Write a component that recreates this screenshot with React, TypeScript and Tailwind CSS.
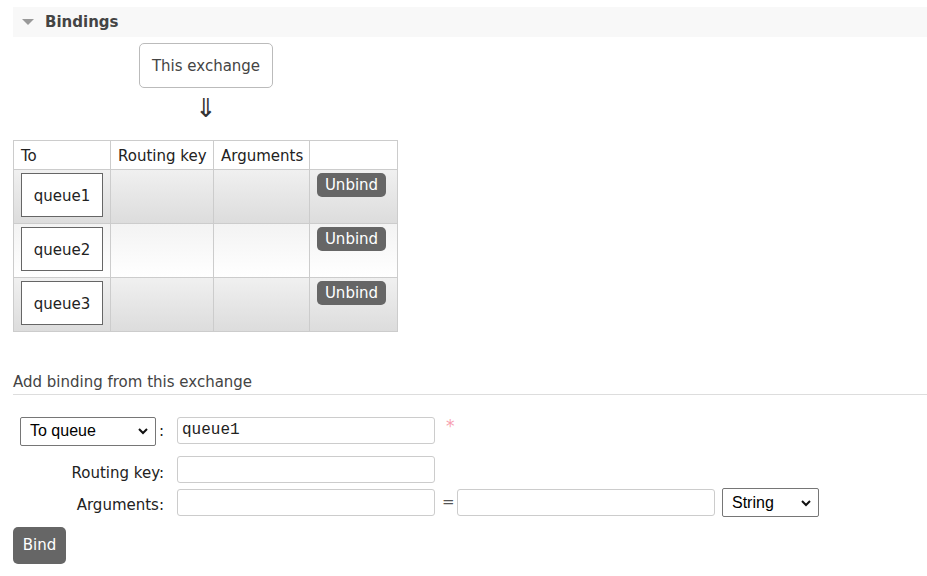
import React from "react";

const queues = ["queue1", "queue2", "queue3"];

function ChevronDown() {
  return (
    <svg width="12" height="12" viewBox="0 0 12 12" className="shrink-0">
      <path d="M2 4 L6 8 L10 4" fill="none" stroke="#111" strokeWidth="2" />
    </svg>
  );
}

function FakeSelect({ label, width }: { label: string; width: string }) {
  return (
    <div
      className={`${width} flex h-[29px] items-center justify-between rounded-[2px] border border-[#767676] bg-white pl-[9px] pr-[6px] font-['Liberation_Sans',Arial,sans-serif] text-[16px] text-black`}
    >
      <span>{label}</span>
      <ChevronDown />
    </div>
  );
}

export default function App() {
  return (
    <div className="min-h-screen bg-white pl-[13px] pt-[7px] font-['DejaVu_Sans',Verdana,sans-serif] text-[15px] text-[#222]">
      <div className="flex h-[30px] items-center bg-[#f8f8f8]">
        <div className="ml-[9px] h-0 w-0 border-x-[6px] border-t-[6px] border-x-transparent border-t-[#999]" />
        <span className="ml-[11px] font-bold text-[#444]">Bindings</span>
      </div>

      <div className="ml-[126px] mt-[6px] flex h-[45px] w-[134px] items-center justify-center rounded-[5px] border border-[#bbb] pt-[2px] text-[#444]">
        This exchange
      </div>
      <div className="ml-[126px] flex h-[38px] w-[134px] items-center justify-center pt-[2px] text-[26px] leading-none text-[#333]">
        ⇓
      </div>

      <table className="mt-[14px] w-[384px] table-fixed border-collapse whitespace-nowrap">
        <colgroup>
          <col className="w-[97px]" />
          <col className="w-[103px]" />
          <col className="w-[96px]" />
          <col className="w-[88px]" />
        </colgroup>
        <thead>
          <tr className="h-[29px] bg-white text-left">
            <th className="border border-[#ccc] px-[7px] pt-[2px] font-normal">To</th>
            <th className="border border-[#ccc] px-[7px] pt-[2px] font-normal">Routing key</th>
            <th className="border border-[#ccc] px-[7px] pt-[2px] font-normal">Arguments</th>
            <th className="border border-[#ccc] px-[7px] font-normal"></th>
          </tr>
        </thead>
        <tbody>
          {queues.map((q, i) => (
            <tr
              key={q}
              className={
                i % 2 === 0
                  ? "h-[54px] bg-linear-to-b from-[#f0f0f0] to-[#dcdcdc]"
                  : "h-[54px] bg-linear-to-b from-[#f3f3f3] to-[#ffffff]"
              }
            >
              <td className="border border-[#ccc] p-0 align-top">
                <div className="ml-[7px] mt-[3px] flex h-[44px] w-[82px] items-center justify-center border border-[#666] bg-white pt-[2px]">
                  {q}
                </div>
              </td>
              <td className="border border-[#ccc]"></td>
              <td className="border border-[#ccc]"></td>
              <td className="border border-[#ccc] p-0 align-top">
                <button className="ml-[7px] mt-[3px] flex h-[24px] w-[69px] items-center justify-center rounded-[5px] bg-[#666] text-white">
                  Unbind
                </button>
              </td>
            </tr>
          ))}
        </tbody>
      </table>

      <div className="mt-[39px] border-b border-[#ddd] text-[#444]">Add binding from this exchange</div>

      <div className="mt-[22px] flex items-start">
        <div className="ml-[7px] flex w-[150px] items-center">
          <FakeSelect label="To queue" width="w-[136px]" />
          <span className="ml-[3px]">:</span>
        </div>
        <div className="ml-[7px] flex h-[27px] w-[258px] items-center rounded-[3px] border border-[#ccc] pl-[4px] font-['Liberation_Mono','Courier_New',monospace] text-[16px] text-[#222]">
          queue1
        </div>
        <span className="ml-[11px] mt-[1px] text-[17px] leading-none text-[#f7a0b0]">*</span>
      </div>

      <div className="mt-[10px] flex items-center">
        <div className="w-[151px] pt-[6px] text-right">Routing key:</div>
        <div className="ml-[13px] h-[27px] w-[258px] rounded-[3px] border border-[#ccc]" />
      </div>

      <div className="mt-[4px] flex items-center">
        <div className="w-[151px] pt-[6px] text-right">Arguments:</div>
        <div className="ml-[13px] h-[27px] w-[258px] rounded-[3px] border border-[#ccc]" />
        <span className="ml-[7px] w-[15px] text-[#555]">=</span>
        <div className="h-[27px] w-[258px] rounded-[3px] border border-[#ccc]" />
        <div className="ml-[7px]">
          <FakeSelect label="String" width="w-[97px]" />
        </div>
      </div>

      <button className="mt-[10px] flex h-[37px] w-[53px] items-center justify-center rounded-[5px] bg-[#666] text-white">
        Bind
      </button>
    </div>
  );
}
